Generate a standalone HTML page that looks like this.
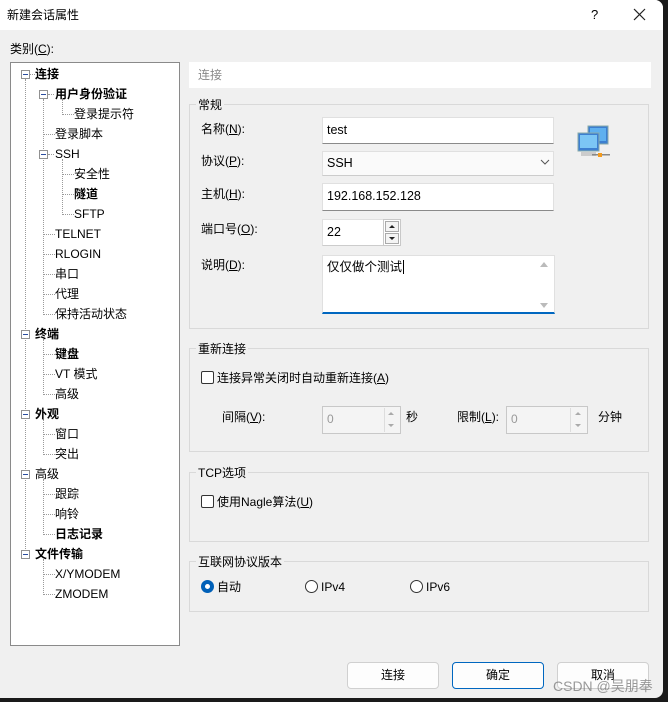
<!DOCTYPE html>
<html><head><meta charset="utf-8"><style>
*{margin:0;padding:0;box-sizing:border-box}
body{width:668px;height:702px;background:#1a1a1a;position:relative;overflow:hidden;font-family:"Liberation Sans","Noto Sans CJK SC",sans-serif;font-size:12px;color:#000}
.win{position:absolute;left:0;top:0;width:663px;height:698px;background:#f0f0f0;border-radius:0 8px 8px 0;overflow:hidden}
.title{position:absolute;left:0;top:0;width:663px;height:30px;background:#fff}
.a{position:absolute;white-space:nowrap;line-height:16px}
.tree{position:absolute;left:10px;top:62px;width:170px;height:584px;background:#fff;border:1px solid #8a8a8a}
.box{position:absolute;width:9px;height:9px;border:1px solid #919191;background:#fff}
.box:after{content:"";position:absolute;left:1px;top:3px;width:5px;height:1px;background:#2b4ea0}
.vl{position:absolute;border-left:1px dotted #9a9a9a;width:0}
.hl{position:absolute;border-top:1px dotted #9a9a9a;height:0}
.b{font-weight:bold}
.grp{position:absolute;border:1px solid #d9d9d9}
.gl{position:absolute;background:#f0f0f0;padding:0 2px;line-height:16px}
.inp{position:absolute;background:#fff;border:1px solid #e0e0e0;border-bottom:1px solid #8a8a8a;padding-left:4px;line-height:25px;font-size:12.5px}
.spin{position:absolute;border:1px solid #c8c8c8;background:#f4f4f4}
.cb{position:absolute;width:13px;height:13px;border:1px solid #333;border-radius:2px;background:#fff}
.rd{position:absolute;width:13px;height:13px;border:1px solid #333;border-radius:50%;background:#fff}
.btn{position:absolute;width:92px;height:27px;border:1px solid #d0d0d0;border-radius:4px;background:#fdfdfd;text-align:center;line-height:25px}
u{text-decoration:underline}
</style></head><body>
<div class="win">
<div class="title"></div>
<div class="a" style="left:7px;top:7px">新建会话属性</div>
<div class="a" style="left:591px;top:7px;font-size:13px">?</div>
<svg class="a" style="left:633px;top:8px" width="13" height="13"><path d="M1 1L12 12M12 1L1 12" stroke="#222" stroke-width="1.2"/></svg>
<div class="a" style="left:10px;top:41px">类别(<u>C</u>):</div>
<div class="tree">
<div class="vl" style="left:14px;top:16px;height:476px"></div>
<div class="vl" style="left:32px;top:36px;height:216px"></div>
<div class="vl" style="left:51px;top:36px;height:16px"></div>
<div class="vl" style="left:51px;top:96px;height:56px"></div>
<div class="vl" style="left:32px;top:276px;height:56px"></div>
<div class="vl" style="left:32px;top:356px;height:36px"></div>
<div class="vl" style="left:32px;top:416px;height:56px"></div>
<div class="vl" style="left:32px;top:496px;height:36px"></div>
<div class="hl" style="left:18px;top:11px;width:6px"></div>
<div class="hl" style="left:37px;top:31px;width:6px"></div>
<div class="hl" style="left:51px;top:51px;width:12px"></div>
<div class="hl" style="left:32px;top:71px;width:12px"></div>
<div class="hl" style="left:37px;top:91px;width:6px"></div>
<div class="hl" style="left:51px;top:111px;width:12px"></div>
<div class="hl" style="left:51px;top:131px;width:12px"></div>
<div class="hl" style="left:51px;top:151px;width:12px"></div>
<div class="hl" style="left:32px;top:171px;width:12px"></div>
<div class="hl" style="left:32px;top:191px;width:12px"></div>
<div class="hl" style="left:32px;top:211px;width:12px"></div>
<div class="hl" style="left:32px;top:231px;width:12px"></div>
<div class="hl" style="left:32px;top:251px;width:12px"></div>
<div class="hl" style="left:32px;top:291px;width:12px"></div>
<div class="hl" style="left:32px;top:311px;width:12px"></div>
<div class="hl" style="left:32px;top:331px;width:12px"></div>
<div class="hl" style="left:32px;top:371px;width:12px"></div>
<div class="hl" style="left:32px;top:391px;width:12px"></div>
<div class="hl" style="left:32px;top:431px;width:12px"></div>
<div class="hl" style="left:32px;top:451px;width:12px"></div>
<div class="hl" style="left:32px;top:471px;width:12px"></div>
<div class="hl" style="left:32px;top:511px;width:12px"></div>
<div class="hl" style="left:32px;top:531px;width:12px"></div>
<div class="box" style="left:10px;top:7px"></div>
<div class="box" style="left:28px;top:27px"></div>
<div class="box" style="left:28px;top:87px"></div>
<div class="box" style="left:10px;top:267px"></div>
<div class="box" style="left:10px;top:347px"></div>
<div class="box" style="left:10px;top:407px"></div>
<div class="box" style="left:10px;top:487px"></div>
<div class="a b" style="left:24px;top:3px">连接</div>
<div class="a b" style="left:44px;top:23px">用户身份验证</div>
<div class="a" style="left:63px;top:43px">登录提示符</div>
<div class="a" style="left:44px;top:63px">登录脚本</div>
<div class="a" style="left:44px;top:83px">SSH</div>
<div class="a" style="left:63px;top:103px">安全性</div>
<div class="a b" style="left:63px;top:123px">隧道</div>
<div class="a" style="left:63px;top:143px">SFTP</div>
<div class="a" style="left:44px;top:163px">TELNET</div>
<div class="a" style="left:44px;top:183px">RLOGIN</div>
<div class="a" style="left:44px;top:203px">串口</div>
<div class="a" style="left:44px;top:223px">代理</div>
<div class="a" style="left:44px;top:243px">保持活动状态</div>
<div class="a b" style="left:24px;top:263px">终端</div>
<div class="a b" style="left:44px;top:283px">键盘</div>
<div class="a" style="left:44px;top:303px">VT 模式</div>
<div class="a" style="left:44px;top:323px">高级</div>
<div class="a b" style="left:24px;top:343px">外观</div>
<div class="a" style="left:44px;top:363px">窗口</div>
<div class="a" style="left:44px;top:383px">突出</div>
<div class="a" style="left:24px;top:403px">高级</div>
<div class="a" style="left:44px;top:423px">跟踪</div>
<div class="a" style="left:44px;top:443px">响铃</div>
<div class="a b" style="left:44px;top:463px">日志记录</div>
<div class="a b" style="left:24px;top:483px">文件传输</div>
<div class="a" style="left:44px;top:503px">X/YMODEM</div>
<div class="a" style="left:44px;top:523px">ZMODEM</div>
</div>

<div class="a" style="left:189px;top:62px;width:462px;height:26px;background:#fff"></div>
<div class="a" style="left:198px;top:67px;color:#888">连接</div>

<div class="grp" style="left:189px;top:104px;width:460px;height:225px"></div>
<div class="gl" style="left:196px;top:97px">常规</div>
<div class="a" style="left:201px;top:121px">名称(<u>N</u>):</div>
<div class="a" style="left:201px;top:153px">协议(<u>P</u>):</div>
<div class="a" style="left:201px;top:186px">主机(<u>H</u>):</div>
<div class="a" style="left:201px;top:221px">端口号(<u>O</u>):</div>
<div class="a" style="left:201px;top:257px">说明(<u>D</u>):</div>
<div class="inp" style="left:322px;top:117px;width:232px;height:27px">test</div>
<div class="inp" style="left:322px;top:151px;width:232px;height:25px;background:#fafafa;border-bottom-color:#ccc;line-height:23px">SSH</div>
<svg class="a" style="left:540px;top:159px" width="10" height="7"><path d="M1 1L5 5L9 1" stroke="#555" fill="none"/></svg>
<div class="inp" style="left:322px;top:183px;width:232px;height:28px">192.168.152.128</div>
<div class="inp" style="left:322px;top:219px;width:62px;height:27px;border-bottom-color:#ccc">22</div>
<div class="spin" style="left:383px;top:219px;width:18px;height:27px;background:#fff"></div>
<div class="a" style="left:385px;top:221px;width:14px;height:11px;border:1px solid #aaa;background:#f4f4f4"></div>
<div class="a" style="left:385px;top:233px;width:14px;height:11px;border:1px solid #aaa;background:#f4f4f4"></div>
<svg class="a" style="left:388px;top:224px" width="8" height="18"><path d="M1 4L4 1L7 4Z M1 13L7 13L4 16Z" fill="#222"/></svg>
<div class="inp" style="left:322px;top:255px;width:233px;height:59px;border-bottom:2px solid #0067c0;line-height:22px">仅仅做个测试<span style="border-left:1px solid #000;margin-left:1px"></span></div>
<svg class="a" style="left:538px;top:260px" width="12" height="50"><path d="M2 7L6 2L10 7Z M2 43L10 43L6 48Z" fill="#bbb"/></svg>
<svg class="a" style="left:576px;top:124px" width="36" height="36">
<rect x="12" y="2" width="20" height="18" fill="#3d7fd0" stroke="#8aa"/><rect x="14" y="4" width="16" height="13" fill="#5fb0ef"/>
<rect x="2" y="9" width="21" height="18" fill="#3d7fd0" stroke="#8aa"/><rect x="4" y="11" width="17" height="13" fill="#7cc6f5"/>
<rect x="5" y="28" width="15" height="4" fill="#ccc"/><rect x="16" y="30" width="18" height="1.5" fill="#888"/><rect x="22" y="29" width="4" height="4" fill="#f39b1f"/></svg>

<div class="grp" style="left:189px;top:348px;width:460px;height:104px"></div>
<div class="gl" style="left:196px;top:341px">重新连接</div>
<div class="cb" style="left:201px;top:371px"></div>
<div class="a" style="left:217px;top:370px">连接异常关闭时自动重新连接(<u>A</u>)</div>
<div class="a" style="left:222px;top:409px">间隔(<u>V</u>):</div>
<div class="spin" style="left:322px;top:406px;width:79px;height:28px"></div>
<div class="a" style="left:327px;top:411px;color:#999">0</div>
<div class="a" style="left:384px;top:408px;width:15px;height:24px;border-left:1px solid #ddd"></div>
<svg class="a" style="left:387px;top:410px" width="8" height="20"><path d="M1 5L4 2L7 5Z M1 14L7 14L4 17Z" fill="#aaa"/></svg>
<div class="a" style="left:406px;top:409px">秒</div>
<div class="a" style="left:457px;top:409px">限制(<u>L</u>):</div>
<div class="spin" style="left:506px;top:406px;width:82px;height:28px"></div>
<div class="a" style="left:511px;top:411px;color:#999">0</div>
<div class="a" style="left:570px;top:408px;width:16px;height:24px;border-left:1px solid #ddd"></div>
<svg class="a" style="left:574px;top:410px" width="8" height="20"><path d="M1 5L4 2L7 5Z M1 14L7 14L4 17Z" fill="#aaa"/></svg>
<div class="a" style="left:598px;top:409px">分钟</div>

<div class="grp" style="left:189px;top:472px;width:460px;height:70px"></div>
<div class="gl" style="left:196px;top:465px">TCP选项</div>
<div class="cb" style="left:201px;top:495px"></div>
<div class="a" style="left:217px;top:494px">使用Nagle算法(<u>U</u>)</div>

<div class="grp" style="left:189px;top:561px;width:460px;height:51px"></div>
<div class="gl" style="left:196px;top:554px">互联网协议版本</div>
<div class="rd" style="left:201px;top:580px;border:4px solid #0060b8"></div>
<div class="a" style="left:217px;top:579px">自动</div>
<div class="rd" style="left:305px;top:580px"></div>
<div class="a" style="left:321px;top:579px">IPv4</div>
<div class="rd" style="left:410px;top:580px"></div>
<div class="a" style="left:426px;top:579px">IPv6</div>

<div class="btn" style="left:347px;top:662px">连接</div>
<div class="btn" style="left:452px;top:662px;border-color:#0067c0">确定</div>
<div class="btn" style="left:557px;top:662px">取消</div>
<div class="a" style="left:553px;top:678px;color:rgba(120,120,120,.75);font-size:14px">CSDN @吴朋奉</div>
</div>
</body></html>
